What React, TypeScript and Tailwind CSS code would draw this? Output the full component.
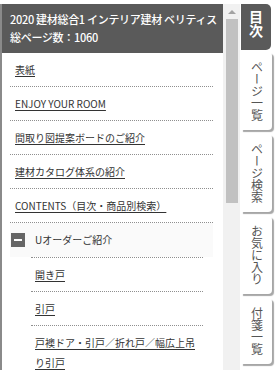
import React from "react";

const font = { fontFamily: '"Noto Sans CJK JP", "Noto Sans", sans-serif' };

function Row({ text }: { text: string }) {
  return (
    <div className="pt-[7px] pb-[6px] leading-[20px] border-b border-dotted border-[#8f8f8f] pl-[5px] pr-[4px]">
      <span className="underline underline-offset-[2px] text-[#333]">{text}</span>
    </div>
  );
}

function SubRow({ text }: { text: string }) {
  return (
    <div className="pt-[7px] pb-[6px] leading-[20px] border-b border-dotted border-[#8f8f8f] pl-[4px] pr-[4px]">
      <span className="underline underline-offset-[2px] text-[#333]">{text}</span>
    </div>
  );
}

function Tab({ text }: { text: string }) {
  return (
    <div className="shrink-0 w-[31px] ml-[1px] bg-white rounded-r-[4px] shadow-[2px_2px_1px_rgba(0,0,0,0.35)] py-[9px] flex justify-center">
      <span className="[writing-mode:vertical-rl] text-[12px] leading-[16px] text-[#555]">{text}</span>
    </div>
  );
}

export default function App() {
  return (
    <div className="w-[277px] h-[370px] bg-white overflow-hidden pt-[4px] flex" style={font}>
      <div className="w-[240px] h-[366px] shrink-0 flex border-l-2 border-[#8a8a8a]">
        <div className="w-[221px] shrink-0 flex flex-col overflow-hidden">
          <div className="shrink-0 h-[49px] bg-[#5a5a5a] text-white text-[11px] leading-[18px] pl-[8px] pt-[6px] font-medium whitespace-nowrap tracking-[-0.3px]">
            <div>2020 建材総合1 インテリア建材 ベリティス</div>
            <div>総ページ数：1060</div>
          </div>
          <div className="shrink-0 ml-[8px] mr-[10px] text-[10px]">
            <Row text="表紙" />
            <Row text="ENJOY YOUR ROOM" />
            <Row text="間取り図提案ボードのご紹介" />
            <Row text="建材カタログ体系の紹介" />
            <Row text="CONTENTS（目次・商品別検索）" />
            <div className="bg-[#fafafa] pt-[7px] pb-[7px] leading-[20px] flex items-center">
              <div className="w-[14px] h-[14px] bg-[#666] ml-[1px] flex items-center justify-center">
                <div className="w-[8px] h-[2px] bg-white" />
              </div>
              <span className="ml-[10px] text-[#333]">Uオーダーご紹介</span>
            </div>
            <div className="ml-[21px] mr-[10px] border-t border-dotted border-[#8f8f8f]">
              <SubRow text="開き戸" />
              <SubRow text="引戸" />
              <SubRow text="戸襖ドア・引戸／折れ戸／幅広上吊り引戸" />
            </div>
          </div>
        </div>
        <div className="w-[17px] shrink-0 bg-[#f1f1f1] flex flex-col items-center">
          <div className="h-[15px] shrink-0 flex items-center justify-center">
            <svg width="8" height="5" viewBox="0 0 8 5">
              <path d="M0 5 L4 1 L8 5 Z" fill="#a3a3a3" />
            </svg>
          </div>
          <div className="w-[12px] h-[184px] shrink-0 bg-[#c1c1c1]" />
        </div>
      </div>
      <div className="w-[37px] shrink-0 flex flex-col gap-[4px]">
        <div className="shrink-0 w-[30px] ml-[1px] h-[46px] bg-[#5a5a5a] rounded-r-[5px] flex justify-center pt-[6px] mb-[-2px]">
          <span className="[writing-mode:vertical-rl] text-[14px] leading-[16px] font-bold text-white">目次</span>
        </div>
        <Tab text="ページ一覧" />
        <Tab text="ページ検索" />
        <Tab text="お気に入り" />
        <Tab text="付箋一覧" />
      </div>
    </div>
  );
}
